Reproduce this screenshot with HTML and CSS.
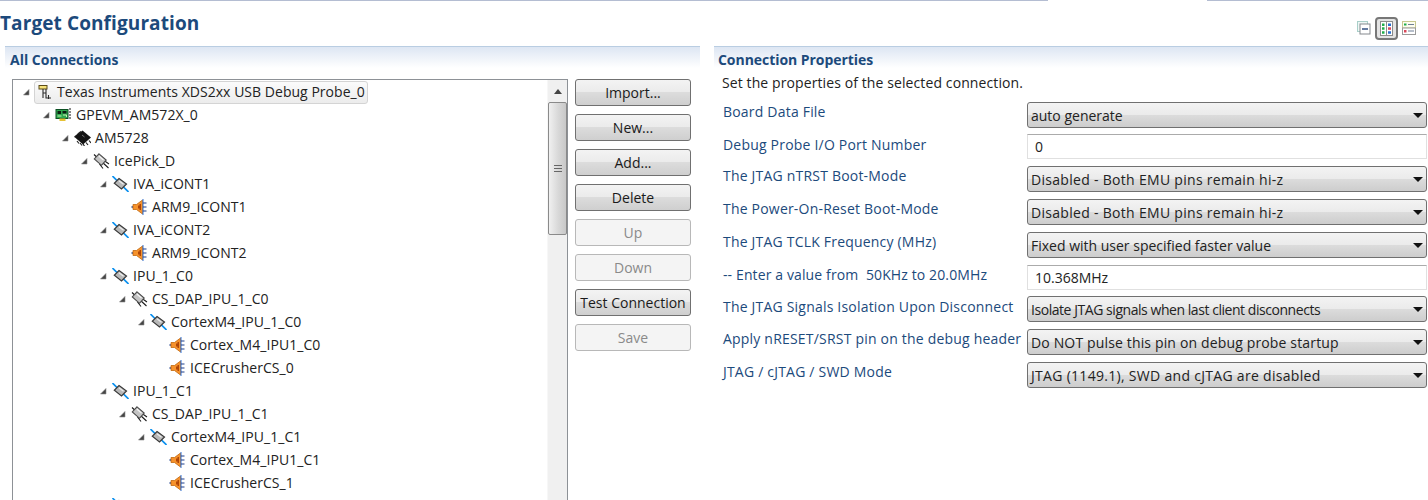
FILE: index.html
```html
<!DOCTYPE html>
<html lang="en">
<head>
<meta charset="utf-8">
<title>Target Configuration</title>
<link rel="stylesheet" href="styles.css">
</head>
<body>
<svg class="defs" width="0" height="0">
  <defs>
    <symbol id="arrow" viewBox="0 0 8 8"><path d="M7 1.500V7H1.500z" fill="#444"/><path d="M7 1.500V7H1.500z" fill="none" stroke="#8a8a8a" stroke-width=".6"/></symbol>
    <symbol id="probe" viewBox="0 0 16 16"><rect x="1.500" y="1.500" width="8" height="3.500" fill="#f6e27a" stroke="#5c4c18"/><path d="M5.500 5v9M5.500 9H8.500M8.500 5v9h5M11 11v4" fill="none" stroke="#2a2a2a" stroke-width="1.100"/></symbol>
    <symbol id="board" viewBox="0 0 16 16"><rect x="0.500" y="2.500" width="12" height="9" fill="#2ea84f" stroke="#0b4f22"/><rect x="2" y="4" width="3.500" height="3" fill="#0d1f12"/><rect x="7" y="4" width="4" height="2.500" fill="#0d1f12"/><path d="M2 9h4M7.500 8h3.500v2" stroke="#c8f0b0" fill="none"/><rect x="4" y="11.500" width="6" height="2.500" fill="#e6c235"/><path d="M14.500 1v12" stroke="#3a3a3a" stroke-dasharray="2 1" stroke-width="1.200"/></symbol>
    <symbol id="chip" viewBox="0 0 17 16"><path d="M3 5 .5 7M5 3 3 5M7 1.500 5 3M3 11l2 2.500M6 13l2 2.500M9 14 10.500 16M12 12.500l2 2.500M15 10.500l2 2.500" stroke="#222" stroke-width="1.200"/><path d="M8.500 .5 17 7.500 9 14.500 .5 7z" fill="#141414"/><path d="M8 5l2.500 2" stroke="#777"/></symbol>
    <symbol id="router" viewBox="0 0 16 16"><path d="M0.500 1.500 15 15M6 11l3.500 4.500M10.500 7.500l5 3.500" stroke="#1c1c1c" fill="none" stroke-width="1.100"/><path d="M5.500 .8 12.700 7 8 12.300 .8 6z" fill="#c4c4c4" stroke="#4a4a4a" stroke-width="1.100"/><path d="M5.300 3 10 7" stroke="#f5f5f5" stroke-width="1.200"/></symbol>
    <symbol id="cpu" viewBox="0 0 16 16"><path d="M0 0 16 16" stroke="#0a8fee" stroke-width="1.600"/><path d="M6.500 2.500 14 8 9 13 1.800 7.300z" fill="#b8b8b8" stroke="#3a3a3a" stroke-width="1.200"/><path d="M6.500 4.800 11 8.300" stroke="#ececec" stroke-width="1.200"/></symbol>
    <symbol id="core" viewBox="0 0 16 16"><path d="M0 8h2" stroke="#1d3f8c" stroke-width="1.500"/><path d="M1.500 5.500H5L11 1v14L5 10.500H1.500z" fill="#f6922c" stroke="#c0680f" stroke-width=".8"/><path d="M6.500 6.500h1.500V5h1.500v6H8V9.500H6.500z" fill="#b04606"/><path d="M11.500 0v16" stroke="#2f74dc"/><path d="M11.500 4h3.500M11.500 8h3.500M11.500 12h3.500" stroke="#1d3f8c" stroke-width="1.200"/></symbol>
    <symbol id="collapse" viewBox="0 0 14 14"><rect x=".5" y=".5" width="10" height="10" fill="#eef6f4" stroke="#a9cfc9"/><rect x="3" y="3" width="10" height="10" fill="#fff" stroke="#85898e"/><path d="M5 8h6" stroke="#12346c" stroke-width="1.300"/></symbol>
    <symbol id="columns" viewBox="0 0 13 15"><rect x=".5" y=".5" width="12" height="14" fill="#fff" stroke="#8c8c8c"/><path d="M6.500 1v13" stroke="#8c8c8c"/><path d="M2 2.500h2.500V5H2zM2 6.300h2.500v2.500H2zM2 10.200h2.500v2.500H2z" fill="#1fae4a"/><path d="M8 2.500h3V5H8zM8 10.200h3v2.500H8z" fill="#2a6fd0"/><path d="M8 6.300h3v2.500H8z" fill="#d9485a"/></symbol>
    <symbol id="list" viewBox="0 0 14 14"><rect x=".5" y=".5" width="13" height="6.500" fill="#fdfdf0" stroke="#c9c98f"/><rect x=".5" y="7" width="13" height="6.500" fill="#fff" stroke="#9a9a9a"/><path d="M2 2.500h2.500v2H2z" fill="#1fae4a"/><path d="M2 9h2.500v2.500H2z" fill="#d9485a"/><path d="M6 3.500h6M6 10h6" stroke="#6e7f96"/></symbol>
  </defs>
</svg>

<div class="top-rule"><span class="rule-a"></span><span class="rule-gap"></span><span class="rule-b"></span></div>

<header class="page-head">
  <h1 class="page-title">Target Configuration</h1>
  <div class="toolbar">
    <svg class="tool"><use href="#collapse"/></svg>
    <span class="tool-on"><svg class="tool-big"><use href="#columns"/></svg></span>
    <svg class="tool"><use href="#list"/></svg>
  </div>
</header>

<main class="columns">
  <section class="left">
    <h2 class="sec-head">All Connections</h2>
    <div class="left-body">
      <div class="tree-box">
        <ul class="tree">
          <li class="row l0"><svg class="arr"><use href="#arrow"/></svg><span class="sel"><svg class="ico"><use href="#probe"/></svg><span class="lbl">Texas Instruments XDS2xx USB Debug Probe_0</span></span></li>
          <li class="row l1"><svg class="arr"><use href="#arrow"/></svg><svg class="ico"><use href="#board"/></svg><span class="lbl">GPEVM_AM572X_0</span></li>
          <li class="row l2"><svg class="arr"><use href="#arrow"/></svg><svg class="ico"><use href="#chip"/></svg><span class="lbl">AM5728</span></li>
          <li class="row l3"><svg class="arr"><use href="#arrow"/></svg><svg class="ico"><use href="#router"/></svg><span class="lbl">IcePick_D</span></li>
          <li class="row l4"><svg class="arr"><use href="#arrow"/></svg><svg class="ico"><use href="#cpu"/></svg><span class="lbl">IVA_iCONT1</span></li>
          <li class="row l5 leaf"><svg class="ico"><use href="#core"/></svg><span class="lbl">ARM9_ICONT1</span></li>
          <li class="row l4"><svg class="arr"><use href="#arrow"/></svg><svg class="ico"><use href="#cpu"/></svg><span class="lbl">IVA_iCONT2</span></li>
          <li class="row l5 leaf"><svg class="ico"><use href="#core"/></svg><span class="lbl">ARM9_ICONT2</span></li>
          <li class="row l4"><svg class="arr"><use href="#arrow"/></svg><svg class="ico"><use href="#cpu"/></svg><span class="lbl">IPU_1_C0</span></li>
          <li class="row l5"><svg class="arr"><use href="#arrow"/></svg><svg class="ico"><use href="#router"/></svg><span class="lbl">CS_DAP_IPU_1_C0</span></li>
          <li class="row l6"><svg class="arr"><use href="#arrow"/></svg><svg class="ico"><use href="#cpu"/></svg><span class="lbl">CortexM4_IPU_1_C0</span></li>
          <li class="row l7 leaf"><svg class="ico"><use href="#core"/></svg><span class="lbl">Cortex_M4_IPU1_C0</span></li>
          <li class="row l7 leaf"><svg class="ico"><use href="#core"/></svg><span class="lbl">ICECrusherCS_0</span></li>
          <li class="row l4"><svg class="arr"><use href="#arrow"/></svg><svg class="ico"><use href="#cpu"/></svg><span class="lbl">IPU_1_C1</span></li>
          <li class="row l5"><svg class="arr"><use href="#arrow"/></svg><svg class="ico"><use href="#router"/></svg><span class="lbl">CS_DAP_IPU_1_C1</span></li>
          <li class="row l6"><svg class="arr"><use href="#arrow"/></svg><svg class="ico"><use href="#cpu"/></svg><span class="lbl">CortexM4_IPU_1_C1</span></li>
          <li class="row l7 leaf"><svg class="ico"><use href="#core"/></svg><span class="lbl">Cortex_M4_IPU1_C1</span></li>
          <li class="row l7 leaf"><svg class="ico"><use href="#core"/></svg><span class="lbl">ICECrusherCS_1</span></li>
          <li class="row l4"><svg class="arr"><use href="#arrow"/></svg><svg class="ico"><use href="#cpu"/></svg><span class="lbl"></span></li>
        </ul>
        <div class="scrollbar">
          <span class="sb-up"></span>
          <span class="sb-thumb"><span class="grip"></span></span>
          <span class="sb-fill"></span>
          <span class="sb-down"></span>
        </div>
      </div>
      <div class="buttons">
        <button class="btn">Import...</button>
        <button class="btn">New...</button>
        <button class="btn">Add...</button>
        <button class="btn">Delete</button>
        <button class="btn off">Up</button>
        <button class="btn off">Down</button>
        <button class="btn">Test Connection</button>
        <button class="btn off">Save</button>
      </div>
    </div>
  </section>

  <section class="right">
    <h2 class="sec-head sec-right">Connection Properties</h2>
    <p class="desc">Set the properties of the selected connection.</p>
    <div class="form">
      <div class="f-row r-short"><span class="f-lab">Board Data File</span><div class="sel-box">auto generate</div></div>
      <div class="f-row r-short r2"><span class="f-lab">Debug Probe I/O Port Number</span><div class="txt-box">0</div></div>
      <div class="f-row"><span class="f-lab">The JTAG nTRST Boot-Mode</span><div class="sel-box wide">Disabled - Both EMU pins remain hi-z</div></div>
      <div class="f-row"><span class="f-lab">The Power-On-Reset Boot-Mode</span><div class="sel-box wide">Disabled - Both EMU pins remain hi-z</div></div>
      <div class="f-row"><span class="f-lab">The JTAG TCLK Frequency (MHz)</span><div class="sel-box">Fixed with user specified faster value</div></div>
      <div class="f-row r-txt"><span class="f-lab lab-tight">-- Enter a value from&nbsp; 50KHz to 20.0MHz</span><div class="txt-box">10.368MHz</div></div>
      <div class="f-row r2"><span class="f-lab">The JTAG Signals Isolation Upon Disconnect</span><div class="sel-box tight">Isolate JTAG signals when last client disconnects</div></div>
      <div class="f-row"><span class="f-lab">Apply nRESET/SRST pin on the debug header</span><div class="sel-box mid">Do NOT pulse this pin on debug probe startup</div></div>
      <div class="f-row"><span class="f-lab">JTAG / cJTAG / SWD Mode</span><div class="sel-box wide">JTAG (1149.1), SWD and cJTAG are disabled</div></div>
    </div>
  </section>
</main>
</body>
</html>
```

FILE: styles.css
```css
* { box-sizing: border-box; }
html, body { margin: 0; padding: 0; height: 500px; overflow: hidden; background: #fff; }
body { font-family: "Open Sans", "Noto Sans", sans-serif; font-size: 14px; color: #222; }
.defs { position: absolute; }

.top-rule { display: flex; height: 1px; }
.rule-a { width: 1048px; background: #b4bdd2; }
.rule-gap { width: 159px; }
.rule-b { flex: 1; background: #b4bdd2; }

.page-head { display: flex; justify-content: space-between; height: 45px; }
.page-title { margin: 10px 0 0; font-size: 19px; line-height: 25px; font-weight: 700; color: #1c4a7c; letter-spacing: .1px; }
.toolbar { display: flex; align-items: center; gap: 4px; padding: 17px 12px 0 0; height: 37px; }
.tool { display: block; width: 14px; height: 14px; }
.tool-big { display: block; width: 13px; height: 15px; }
.tool-on { display: block; padding: 2px 3px; border: 2px solid #777; border-radius: 4px; background: #e4e4e4; }

.columns { display: flex; }
.left { width: 700px; padding-left: 5px; }
.right { flex: 1; margin-left: 14px; }

.sec-head {
  margin: 0; height: 22px; padding-left: 5px;
  border-top: 1px solid #b9cde2;
  background: linear-gradient(#dde6f3, #fff);
  font-size: 14px; line-height: 25px; font-weight: 700; color: #1c4a7c;
}
.sec-right { padding-left: 4px; letter-spacing: -.05px; }

.left-body { display: flex; gap: 7px; padding: 11px 0 0 7px; }
.tree-box { display: flex; width: 556px; height: 440px; border: 1px solid #8d9196; border-bottom: 0; overflow: hidden; }
.tree { flex: 1; list-style: none; margin: 0; padding: 0; min-width: 0; }
.row { display: flex; align-items: center; height: 23px; white-space: nowrap; line-height: 22px; letter-spacing: .05px; }
.l0 { padding-left: 9px; letter-spacing: .03px; }
.l1 { padding-left: 29px; }
.l2 { padding-left: 48px; }
.l3 { padding-left: 67px; }
.l4 { padding-left: 86px; }
.l5 { padding-left: 105px; }
.l6 { padding-left: 124px; }
.l5.leaf { padding-left: 118px; }
.l7.leaf { padding-left: 156px; }
.arr { width: 8px; height: 8px; margin-right: 5px; flex: none; }
.ico { width: 17px; height: 16px; margin-right: 4px; flex: none; }
.sel {
  display: flex; align-items: center; height: 23px; padding: 0 2px 0 2px; margin: 1px 0 0 -1px;
  border: 1px solid #d4d4d4; border-radius: 3px;
  background: linear-gradient(#fbfbfb, #ececec);
}
.lbl { color: #222; }
.sel .ico { margin-right: 3px; }

.scrollbar { display: flex; flex-direction: column; width: 20px; flex: none; background: #f0f0f0; border-left: 1px solid #f7f7f7; }
.sb-up, .sb-down { height: 22px; flex: none; display: flex; align-items: center; justify-content: center; }
.sb-up::before { content: ""; border: 4px solid transparent; border-top: 0; border-bottom: 5px solid #444; }
.sb-down::before { content: ""; border: 4px solid transparent; border-bottom: 0; border-top: 5px solid #666; }
.sb-thumb { height: 133px; flex: none; display: flex; align-items: center; justify-content: center; border: 1px solid #8a8a8a; border-radius: 2px; background: linear-gradient(90deg, #f0f0f0, #d8d8d8 55%, #c8c8c8); }
.grip { width: 8px; height: 7px; border-top: 1px solid #666; border-bottom: 1px solid #666; background: linear-gradient(transparent 2px, #666 2px, #666 3px, transparent 3px); }
.sb-fill { flex: 1; }

.buttons { display: flex; flex-direction: column; gap: 8px; width: 116px; flex: none; }
.btn {
  display: block; width: 116px; height: 27px; padding: 1px 0 0;
  border: 1px solid #707070; border-radius: 3px;
  background: linear-gradient(#f3f3f3 0, #ebebeb 48%, #dcdcdc 50%, #cfcfcf 100%);
  font: 14px/24px "Open Sans", "Noto Sans", sans-serif; color: #1a1a1a;
}
.btn.off { background: #f4f4f4; border-color: #b8b8b8; color: #8a8a8a; }

.desc { margin: 0; padding: 5px 0 0 8px; height: 34px; line-height: 20px; color: #222; letter-spacing: .1px; }
.form { display: flex; flex-direction: column; }
.f-row { display: flex; height: 33px; padding-left: 9px; }
.r-short { height: 32px; }
.r-txt { height: 31px; }
.f-lab { width: 304px; flex: none; color: #1c4a7c; line-height: 20px; white-space: nowrap; letter-spacing: .2px; }
.f-lab.lab-tight { letter-spacing: .12px; }
.r2 .f-lab { margin-top: 1px; }
.sel-box, .txt-box { width: 400px; flex: none; color: #222; }
.sel-box {
  position: relative; height: 26px; padding-left: 3px; line-height: 25px;
  border: 1px solid #707070; border-radius: 3px;
  background: linear-gradient(#f3f3f3 0, #ebebeb 48%, #dcdcdc 50%, #cdcdcd 100%);
}
.sel-box.wide { letter-spacing: .3px; }
.sel-box.mid { letter-spacing: .15px; }
.sel-box.tight { letter-spacing: -.45px; }
.sel-box::after {
  content: ""; position: absolute; right: 3px; top: 10px;
  border: 4px solid transparent; border-bottom: 0; border-top: 5px solid #111; border-left-width: 5px; border-right-width: 5px;
}
.txt-box { height: 25px; line-height: 24px; border: 1px solid #e0e0e0; border-top-color: #ababab; padding-left: 7px; background: #fff; }
```
